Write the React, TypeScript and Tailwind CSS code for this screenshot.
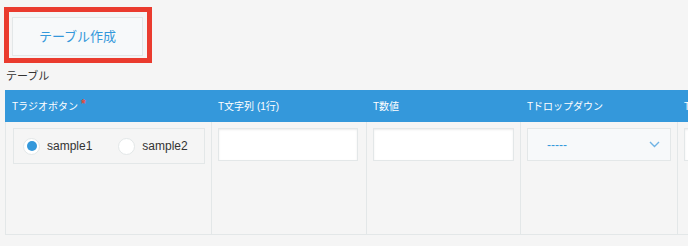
import React from 'react'

const font = { fontFamily: '"Liberation Sans", "Noto Sans CJK JP", sans-serif' }

function Radio({ checked, label }: { checked?: boolean; label: string }) {
  return (
    <label className="flex items-center gap-[7px] text-[12px] text-[#333]">
      <span className="flex h-[17px] w-[17px] items-center justify-center rounded-full border border-[#e3e7e8] bg-white">
        {checked && <span className="h-[10px] w-[10px] rounded-full bg-[#3498db]" />}
      </span>
      {label}
    </label>
  )
}

function TextInput({ width }: { width: number }) {
  return (
    <div
      className="h-[33px] border border-[#e3e7e8] bg-white shadow-[inset_0_1px_2px_rgba(0,0,0,0.08)]"
      style={{ width }}
    />
  )
}

export default function App() {
  return (
    <div className="h-[246px] w-[688px] overflow-hidden bg-[#f5f5f5]" style={font}>
      {/* Create table button, marked in red */}
      <div className="pl-[4px] pt-[7px]">
        <div className="inline-block border-[5px] border-[#ea3b2e] pb-[2px] pl-[3px] pr-[4px] pt-[5px]">
          <button className="flex h-[39px] w-[131px] items-center justify-center border border-[#e3e7e8] bg-[#f7f9fa] text-[13px] text-[#3498db]">
            テーブル作成
          </button>
        </div>
      </div>

      <div className="flex h-[27px] items-center pl-[6px] text-[11px] text-[#333]">テーブル</div>

      <div className="ml-[5px] w-[900px]">
        {/* Header */}
        <div className="flex h-[32px] items-center bg-[#3498db] text-[10px] text-white">
          <div className="flex w-[207px] items-center pl-[7px]">
            Tラジオボタン
            <span className="ml-[3px] -mt-[5px] text-[12px] font-bold text-[#e74c3c]">*</span>
          </div>
          <div className="w-[155px] pl-[6px]">T文字列 (1行)</div>
          <div className="w-[154px] pl-[6px]">T数値</div>
          <div className="w-[157px] pl-[6px]">Tドロップダウン</div>
          <div className="w-[200px] pl-[6px]">T</div>
        </div>

        {/* Body */}
        <div className="flex h-[113px] border-b border-[#e3e7e8]">
          <div className="w-[207px] border-x border-[#e3e7e8] pl-[7px] pt-[6px]">
            <div className="flex h-[36px] w-[192px] items-center gap-[26px] border border-[#e3e7e8] pl-[9px]">
              <Radio checked label="sample1" />
              <Radio label="sample2" />
            </div>
          </div>
          <div className="w-[155px] border-r border-[#e3e7e8] pl-[6px] pt-[6px]">
            <TextInput width={140} />
          </div>
          <div className="w-[154px] border-r border-[#e3e7e8] pl-[6px] pt-[6px]">
            <TextInput width={141} />
          </div>
          <div className="w-[157px] border-r border-[#e3e7e8] pl-[6px] pt-[6px]">
            <div className="flex h-[33px] w-[144px] items-center justify-between border border-[#e3e7e8] bg-[#f7f9fa] pl-[19px] pr-[10px]">
              <span className="text-[12px] text-[#3498db]">-----</span>
              <svg width="11" height="7" viewBox="0 0 11 7" fill="none">
                <path d="M1 1l4.5 4.5L10 1" stroke="#6fb3e4" strokeWidth="1.4" />
              </svg>
            </div>
          </div>
          <div className="w-[200px] pl-[6px] pt-[6px]">
            <TextInput width={150} />
          </div>
        </div>
      </div>
    </div>
  )
}
